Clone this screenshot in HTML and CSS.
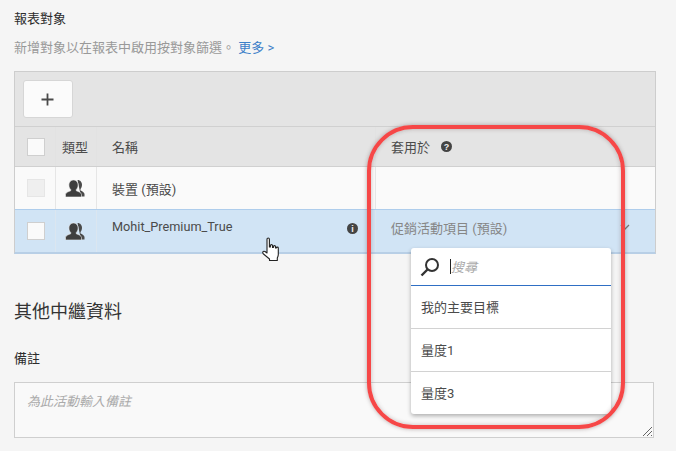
FILE: index.html
```html
<!DOCTYPE html>
<html lang="zh-Hant">
<head>
    <meta charset="UTF-8">
    <title>報表對象</title>
    <link rel="stylesheet" href="styles.css">
</head>
<body>
    <div class="page">
        <h3 class="label">報表對象</h3>
        <p class="hint">新增對象以在報表中啟用按對象篩選。 <a class="more">更多 &gt;</a></p>

        <div class="table">
            <div class="toolbar">
                <div class="add-btn">
                    <svg width="13" height="13" viewBox="0 0 13 13"><path d="M6.5 0.5v12M0.5 6.500h12" stroke="#4a4a4a" stroke-width="1.800" fill="none"/></svg>
                </div>
            </div>
            <div class="row head">
                <div class="cell check"><span class="box"></span></div>
                <div class="cell type">類型</div>
                <div class="cell name">名稱</div>
                <div class="cell applies"><span>套用於</span><span class="dot help">?</span></div>
            </div>
            <div class="row">
                <div class="cell check"><span class="box off"></span></div>
                <div class="cell type">
                    <svg class="people" width="20" height="18" viewBox="0 0 20 18"><use href="#people"/></svg>
                </div>
                <div class="cell name">裝置 (預設)</div>
                <div class="cell applies"></div>
            </div>
            <div class="row active">
                <div class="cell check"><span class="box"></span></div>
                <div class="cell type">
                    <svg class="people" width="20" height="18" viewBox="0 0 20 18"><use href="#people"/></svg>
                </div>
                <div class="cell name top">
                    <span class="user-name">Mohit_Premium_True</span>
                    <span class="dot info">i</span>
                </div>
                <div class="cell applies muted">
                    <span>促銷活動項目 (預設)</span>
                    <svg class="chev" width="10" height="6" viewBox="0 0 10 6"><path d="M1 1l4 4 4-4" stroke="#777" stroke-width="1.300" fill="none"/></svg>
                </div>
            </div>
        </div>

        <h2 class="title">其他中繼資料</h2>
        <h3 class="label note-label">備註</h3>
        <div class="notes">
            <em>為此活動輸入備註</em>
            <svg class="grip" width="9" height="9" viewBox="0 0 9 9"><path d="M0 9L9 0M4 9l5-5M8 9l1-1" stroke="#666" stroke-width="1" fill="none"/></svg>
        </div>
    </div>

    <div class="menu">
        <div class="search">
            <svg width="20" height="20" viewBox="0 0 20 20"><circle cx="12" cy="8" r="6" stroke="#333" stroke-width="2" fill="none"/><path d="M7.500 12.500L1.500 18.500" stroke="#333" stroke-width="2.400" fill="none"/></svg>
            <i class="caret"></i>
            <em>搜尋</em>
        </div>
        <div class="item">我的主要目標</div>
        <div class="item">量度1</div>
        <div class="item">量度3</div>
    </div>

    <div class="ring"></div>

    <svg class="hand" width="20" height="26" viewBox="0 0 20 26">
        <path d="M6 2.200c0-1.600 2.400-1.600 2.400 0V10l1 0V8.600c0-1.300 2.100-1.300 2.100 0V10.500l.9 0V9.600c0-1.300 2.100-1.300 2.100 0v1.400l.8 0c0-1.200 2-1.200 2 0v6.500c0 1.500-.5 2.500-1 3.500v2.500H8.500v-1.500L2.500 17c-1.500-1.500-.5-3.500 1.500-2.500L6 16z" fill="#fff" stroke="#222" stroke-width="1.100" stroke-linejoin="round"/>
    </svg>

    <svg class="defs" width="0" height="0">
        <defs>
            <g id="people">
                <path d="M12.500 1c2.900 0 4.500 2.300 4.500 4.800 0 1.800-.7 3.200-1.500 4.200v1.400c1.700.7 4 1.800 4 3.600v2.500h-3.500z" fill="#4a4a4a"/>
                <path d="M8.500 1c2.800 0 4.600 2.300 4.600 5 0 2-.8 3.500-1.800 4.500v1.300c2.300.8 5.200 1.800 5.200 3.700V18H.5v-2.500c0-1.900 2.900-2.900 5.200-3.700v-1.300C4.700 9.500 3.900 8 3.900 6c0-2.700 1.800-5 4.600-5z" fill="#3f3f3f" stroke="#f2f2f2" stroke-width=".6"/>
            </g>
        </defs>
    </svg>
</body>
</html>
```

FILE: styles.css
```css
* {
    box-sizing: border-box;
}
body {
    margin: 0;
    height: 451px;
    overflow: hidden;
    background-color: #f5f5f5;
    color: #4b4b4b;
    font-family: Roboto, "Noto Sans CJK TC", sans-serif;
    font-size: 13px;
}
.page {
    padding: 12px 20px 0 14px;
}
.label {
    margin: 0;
    font-size: 13px;
    font-weight: 400;
    line-height: 14px;
    color: #2c2c2c;
}
.hint {
    margin: 13px 0 0;
    line-height: 17px;
    color: #999;
}
.more {
    color: #3d80c8;
}
.table {
    margin-top: 15px;
    width: 642px;
    border: 1px solid #cdcdcd;
    border-bottom: 2px solid #b8cfe6;
}
.toolbar {
    height: 55px;
    padding: 8px;
    background-color: #e4e4e4;
    border-bottom: 1px solid #d0d0d0;
}
.add-btn {
    display: flex;
    width: 50px;
    height: 38px;
    padding-right: 2px;
    align-items: center;
    justify-content: center;
    background-color: #fbfbfb;
    border: 1px solid #d6d6d6;
    border-radius: 3px;
}
.row {
    display: grid;
    grid-template-columns: 41px 41px 279px 1fr;
    height: 43px;
    background-color: #fafafa;
    border-bottom: 1px solid #dcdcdc;
}
.row.head {
    height: 40px;
    background-color: #e4e4e4;
    border-bottom-color: #d0d0d0;
}
.row.active {
    height: 43px;
    background-color: #d1e4f5;
    border-top: 1px solid #aecdec;
    margin-top: -1px;
    border-bottom: 0;
}
.cell {
    display: flex;
    align-items: center;
    border-right: 1px solid #e6e6e6;
}
.active .cell {
    border-right-color: #dbe6f0;
}
.head .cell {
    border-right-color: #e2e2e2;
}
.cell:last-child {
    border-right: 0;
}
.check {
    justify-content: center;
    padding-left: 1px;
}
.type {
    justify-content: center;
    padding-right: 2px;
}
.name {
    padding-left: 15px;
    justify-content: space-between;
    padding-right: 17px;
}
.name.top {
    align-items: flex-start;
    padding-top: 9px;
}
.name.top .dot {
    margin-top: 4px;
}
.user-name {
    font-size: 12.7px;
}
.applies {
    padding-left: 15px;
    padding-right: 26px;
}
.muted {
    color: #868686;
    justify-content: space-between;
    padding-bottom: 8px;
}
.box {
    display: block;
    width: 18px;
    height: 18px;
    background-color: #fafafa;
    border: 1px solid #cfcfcf;
}
.box.off {
    background-color: #efefef;
    border-color: #e6e6e6;
}
.dot {
    display: inline-flex;
    width: 11px;
    height: 11px;
    margin-left: 11px;
    align-items: center;
    justify-content: center;
    border-radius: 50%;
    background-color: #444;
    color: #f0f0f0;
    font-family: "Liberation Sans", sans-serif;
    font-size: 9px;
    font-weight: 700;
}
.chev {
    margin-top: -1px;
    margin-right: -1px;
}
.title {
    margin: 47px 0 0;
    font-size: 18px;
    font-weight: 400;
    line-height: 22px;
    color: #333;
}
.note-label {
    margin-top: 29px;
}
.notes {
    position: relative;
    margin-top: 16px;
    width: 640px;
    height: 56px;
    padding: 10px 12px;
    background-color: #f9f9f9;
    border: 1px solid #cfcfcf;
    color: #aaa;
    line-height: 17px;
}
.grip {
    position: absolute;
    right: 1px;
    bottom: 1px;
}
.menu {
    position: absolute;
    left: 411px;
    top: 248px;
    width: 200px;
    height: 166px;
    background-color: #fff;
    border-radius: 3px;
    box-shadow: 0 2px 4px rgba(0, 0, 0, 0.3);
}
.search {
    display: flex;
    height: 38px;
    padding-left: 9px;
    align-items: center;
    border-bottom: 1px solid #2f6fc4;
    color: #aaa;
}
.caret {
    display: block;
    width: 1px;
    height: 15px;
    margin-left: 10px;
    background-color: #222;
}
.item {
    display: flex;
    height: 43px;
    padding: 0 0 2px 10px;
    align-items: center;
    border-bottom: 1px solid #d2d2d2;
}
.item:last-child {
    border-bottom: 0;
}
.ring {
    position: absolute;
    left: 367px;
    top: 125px;
    width: 258px;
    height: 304px;
    border: 4px solid #f64747;
    border-radius: 46px;
    box-shadow: 0 0 4px rgba(80, 50, 50, 0.4), inset 0 0 4px rgba(80, 50, 50, 0.3);
}
.hand {
    position: absolute;
    left: 261px;
    top: 237px;
}
.defs {
    position: absolute;
}
```
